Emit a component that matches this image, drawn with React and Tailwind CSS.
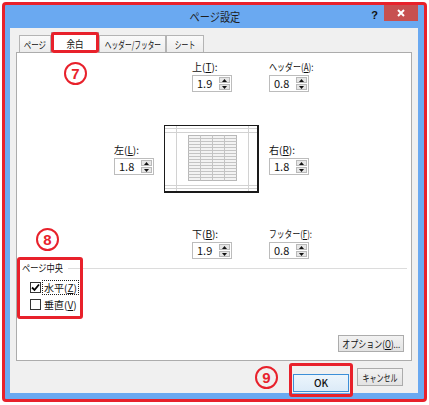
import React from 'react';

const FONT = 'font-["Noto_Sans_CJK_JP",sans-serif]';

function Key({ children }) {
  return <span className="underline underline-offset-[1px]">{children}</span>;
}

function Sq({ children, className = '' }) {
  return <span className={`inline-block whitespace-nowrap ${className}`}>{children}</span>;
}

function Circled({ n }) {
  return (
    <div className="flex h-[23px] w-[23px] items-center justify-center rounded-full border-2 border-[#e8212b] font-['Liberation_Sans',sans-serif] text-[15px] leading-none font-bold text-[#e8212b]">
      {n}
    </div>
  );
}

function SpinBtn({ up }) {
  return (
    <div className="flex flex-1 items-center justify-center border border-[#b9b9b9] bg-[#e6e6e6]">
      <svg width="5" height="3" viewBox="0 0 5 3">
        <path d={up ? 'M0 3h5L2.5 0z' : 'M0 0h5L2.5 3z'} fill="#111" />
      </svg>
    </div>
  );
}

function SpinBox({ value }) {
  return (
    <div className="flex h-[17px] w-[40px] border border-[#bcbcbc] bg-white">
      <span className="flex-1 pl-[4px] text-[11px] leading-[15px] text-[#111]">{value}</span>
      <div className="my-px mr-px flex w-[11px] flex-col gap-px">
        <SpinBtn up />
        <SpinBtn />
      </div>
    </div>
  );
}

function Field({ label, value }) {
  return (
    <div className="flex w-[40px] flex-col">
      <div className="h-[14px] text-[10px] leading-[14px] whitespace-nowrap text-[#111]">{label}</div>
      <div className="mt-px">
        <SpinBox value={value} />
      </div>
    </div>
  );
}

// small page drawing with margin guides and a cell block
function Preview() {
  const rows = Array.from({ length: 14 }, (_, i) => 12 + i * 3);
  return (
    <div className="h-[68px] w-[95px] border border-r-2 border-b-2 border-[#1a1a1a] bg-white">
      <svg width="92" height="65" viewBox="0 0 92 65">
        <g stroke="#d2d2d2" strokeWidth="1">
          <line x1="11.5" y1="0" x2="11.5" y2="65" />
          <line x1="83.5" y1="0" x2="83.5" y2="65" />
          <line x1="0" y1="2.5" x2="92" y2="2.5" />
          <line x1="0" y1="6.5" x2="92" y2="6.5" />
          <line x1="0" y1="59.5" x2="92" y2="59.5" />
          <line x1="0" y1="62.5" x2="92" y2="62.5" />
        </g>
        <rect x="23.5" y="9.5" width="48" height="45" fill="#f3f3f3" stroke="#b8b8b8" />
        <g stroke="#c4c4c4" strokeWidth="1">
          {rows.map((y) => (
            <line key={y} x1="23.5" y1={y + 0.5} x2="71.5" y2={y + 0.5} />
          ))}
          <line x1="35.5" y1="9.5" x2="35.5" y2="54.5" />
          <line x1="47.5" y1="9.5" x2="47.5" y2="54.5" />
          <line x1="59.5" y1="9.5" x2="59.5" y2="54.5" />
        </g>
      </svg>
    </div>
  );
}

function CheckRow({ checked, label, k, focused }) {
  return (
    <div className="flex h-[17px] items-center pl-[13px]">
      <div className="flex h-[11px] w-[11px] items-center justify-center border border-[#333] bg-white">
        {checked && (
          <svg width="9" height="9" viewBox="0 0 9 9">
            <path d="M1 4.5L3.5 7L8 1.5" fill="none" stroke="#000" strokeWidth="1.8" />
          </svg>
        )}
      </div>
      <span
        className={`ml-[1px] px-px text-[10px] leading-[13px] whitespace-nowrap text-[#111] ${
          focused ? 'border border-dotted border-[#222]' : 'border border-transparent'
        }`}
      >
        {label}(<Key>{k}</Key>)
      </span>
    </div>
  );
}

function Tab({ children, width, active }) {
  if (active) {
    return (
      <div
        className="relative flex h-[21px] items-center justify-center border border-b-0 border-[#acacac] bg-white text-[10px] whitespace-nowrap text-[#111]"
        style={{ width }}
      >
        {children}
        <div className="absolute -top-px -right-px -bottom-0 -left-px rounded-[3px] border-[3px] border-[#e8212b]" />
      </div>
    );
  }
  return (
    <div
      className="mb-px flex h-[17px] items-center justify-center border border-b-0 border-[#b4b4b4] bg-linear-to-b from-[#fafafa] to-[#ececec] text-[10px] whitespace-nowrap text-[#111]"
      style={{ width }}
    >
      {children}
    </div>
  );
}

export default function App() {
  return (
    <div className={`h-[405px] w-[429px] bg-white p-[2px] ${FONT}`}>
      <div className="flex h-[400px] w-[425px] flex-col rounded-[4px] border-[3px] border-[#e8212b] bg-[#6aa9f1]">
        {/* title bar */}
        <div className="relative flex h-[23px] shrink-0 items-center justify-center">
          <Sq className="scale-x-[0.85] text-[12px] text-[#1e1e1e]">ページ設定</Sq>
          <div className="absolute top-0 right-[6px] flex items-start">
            <span className="mt-[2px] mr-[6px] font-['Liberation_Sans',sans-serif] text-[11px] font-bold text-[#111]">?</span>
            <div className="flex h-[16px] w-[34px] items-center justify-center bg-[#c75050]">
              <svg width="8" height="8" viewBox="0 0 8 8">
                <path d="M1 1L7 7M7 1L1 7" stroke="#fff" strokeWidth="2" />
              </svg>
            </div>
          </div>
        </div>

        {/* client area */}
        <div className="mr-[6px] mb-[6px] ml-[5px] flex flex-1 flex-col bg-[#f0f0f0]">
          <div className="relative z-10 mt-[4px] flex h-[21px] items-end pl-[9px]">
            <Tab width={32}>
              <Sq className="scale-x-[0.75]">ページ</Sq>
            </Tab>
            <Tab width={48} active>
              <Sq className="scale-x-[0.85]">余白</Sq>
            </Tab>
            <Tab width={67}>
              <Sq className="scale-x-[0.67]">ヘッダー/フッター</Sq>
            </Tab>
            <Tab width={38}>
              <Sq className="scale-x-[0.68]">シート</Sq>
            </Tab>
          </div>

          <div className="relative mx-[6px] -mt-px h-[309px] border border-[#acacac] bg-white">
            <div className="absolute top-[9px] left-[47px]">
              <Circled n="7" />
            </div>

            <div className="flex flex-col">
              <div className="flex gap-[37px] pt-[7px] pl-[175px]">
                <Field label={<>上(<Key>T</Key>):</>} value="1.9" />
                <Field
                  label={
                    <Sq className="origin-left scale-x-[0.8]">
                      ヘッダー(<Key>A</Key>):
                    </Sq>
                  }
                  value="0.8"
                />
              </div>

              <div className="mt-[33px] flex items-center gap-[10px] pl-[97px]">
                <Field label={<>左(<Key>L</Key>):</>} value="1.8" />
                <Preview />
                <Field label={<>右(<Key>R</Key>):</>} value="1.8" />
              </div>

              <div className="mt-[34px] flex gap-[37px] pl-[175px]">
                <Field label={<>下(<Key>B</Key>):</>} value="1.9" />
                <Field
                  label={
                    <Sq className="origin-left scale-x-[0.78]">
                      フッター(<Key>F</Key>):
                    </Sq>
                  }
                  value="0.8"
                />
              </div>

              <div className="relative mt-[2px]">
                <div className="absolute -top-[33px] left-[19px]">
                  <Circled n="8" />
                </div>
                <div className="flex h-[14px] items-center pl-[5px]">
                  <div className="w-[42px] shrink-0 text-[10px] leading-[14px] text-[#111]">
                    <Sq className="origin-left scale-x-[0.82]">ページ中央</Sq>
                  </div>
                  <div className="mr-[4px] ml-[4px] h-px flex-1 bg-[#dcdcdc]" />
                </div>
                <div className="mt-[4px]">
                  <CheckRow checked focused label="水平" k="Z" />
                  <CheckRow label="垂直" k="V" />
                </div>
                <div className="absolute -top-[4px] left-0 h-[62px] w-[66px] rounded-[3px] border-[3px] border-[#e8212b]" />
              </div>

              <div className="mt-[22px] mr-[7px] flex justify-end">
                <button className="flex h-[17px] w-[66px] items-center justify-center border border-[#acacac] bg-linear-to-b from-[#f2f2f2] to-[#e3e3e3] text-[10px] text-[#111]">
                  <Sq className="scale-x-[0.8]">
                    オプション(<Key>O</Key>)...
                  </Sq>
                </button>
              </div>
            </div>
          </div>

          <div className="mt-[7px] flex justify-end gap-[8px] pr-[15px]">
            <div className="relative">
              <div className="absolute top-[-2px] -left-[38px]">
                <Circled n="9" />
              </div>
              <button className="h-[18px] w-[56px] border border-[#3c8fd8] bg-linear-to-b from-[#ecf5fc] to-[#dcebf8] text-[10px] leading-[16px] font-medium text-[#111]">
                OK
              </button>
              <div className="absolute -top-[5px] -right-[4px] -bottom-[5px] -left-[4px] rounded-[3px] border-[3px] border-[#e8212b]" />
            </div>
            <button className="flex h-[18px] w-[46px] items-center justify-center border border-[#acacac] bg-linear-to-b from-[#f2f2f2] to-[#e3e3e3] text-[10px] text-[#111]">
              <Sq className="scale-x-[0.7]">キャンセル</Sq>
            </button>
          </div>
        </div>
      </div>
    </div>
  );
}
